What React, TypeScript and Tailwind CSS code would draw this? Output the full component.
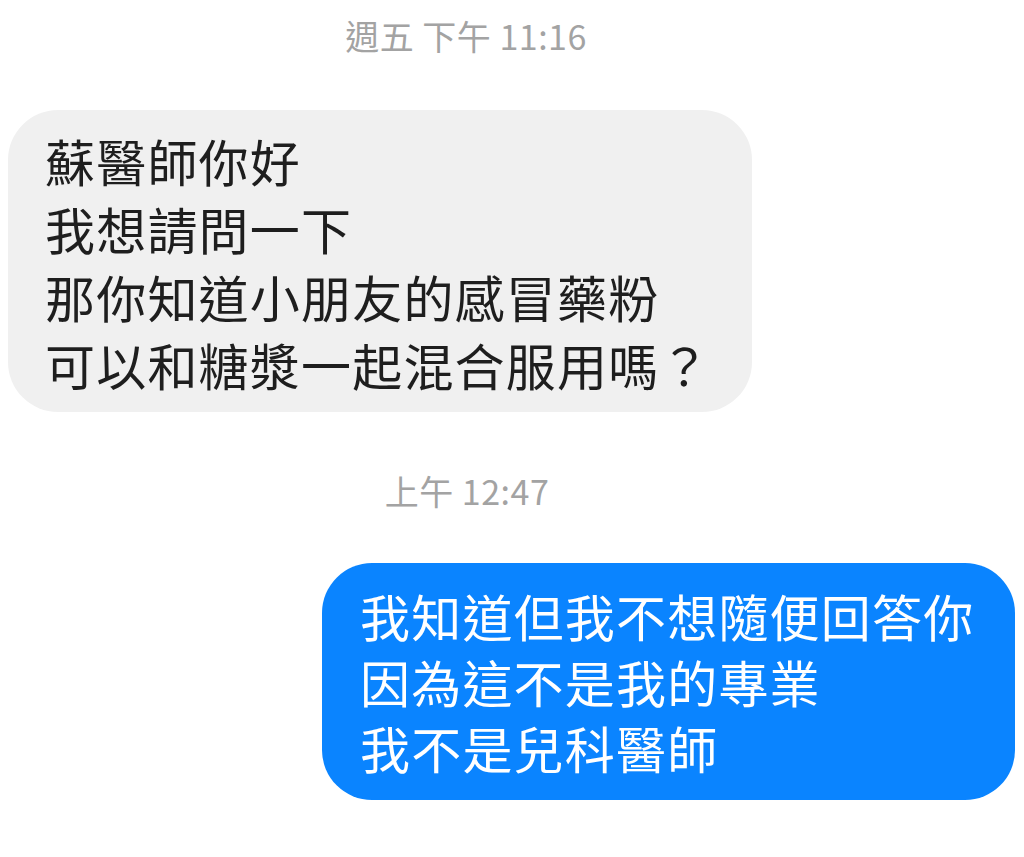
import React from 'react';

type Msg = {
  kind: 'time' | 'in' | 'out';
  lines: string[];
};

const messages: Msg[] = [
  { kind: 'time', lines: ['週五 下午 11:16'] },
  { kind: 'in', lines: ['蘇醫師你好', '我想請問一下', '那你知道小朋友的感冒藥粉', '可以和糖漿一起混合服用嗎？'] },
  { kind: 'time', lines: ['上午 12:47'] },
  { kind: 'out', lines: ['我知道但我不想隨便回答你', '因為這不是我的專業', '我不是兒科醫師'] },
];

const font = { fontFamily: '"Noto Sans CJK TC", "Noto Sans", sans-serif' };

const App: React.FC = () => {
  return (
    <div className="w-[1024px] h-[857px] bg-white overflow-hidden flex flex-col" style={font}>
      {/* first timestamp (screenshot is cropped, so it sits left of centre) */}
      <div className="w-[932px] pt-[10px] pb-[48px] text-center text-[34px] leading-[52px] text-[#a3a3a3] tracking-[0.5px]">
        {messages[0].lines[0]}
      </div>

      {/* incoming bubble */}
      <div className="ml-[8px] w-[744px] rounded-[50px] bg-[#f0f0f0] pl-[37px] pt-[16px] pb-[14px] text-[50px] leading-[68px] tracking-[1.2px] text-[#1e1e1e]">
        {messages[1].lines.map((l) => (
          <div key={l}>{l}</div>
        ))}
      </div>

      {/* second timestamp */}
      <div className="w-[934px] pt-[53px] pb-[46px] text-center text-[34px] leading-[52px] text-[#a3a3a3] tracking-[0.5px]">
        {messages[2].lines[0]}
      </div>

      {/* outgoing bubble */}
      <div className="ml-auto mr-[9px] w-[693px] rounded-[50px] bg-[#0a84ff] pl-[38px] pt-[19px] pb-[20px] text-[50px] leading-[66px] tracking-[1.2px] text-white">
        {messages[3].lines.map((l) => (
          <div key={l}>{l}</div>
        ))}
      </div>
    </div>
  );
};

export default App;
